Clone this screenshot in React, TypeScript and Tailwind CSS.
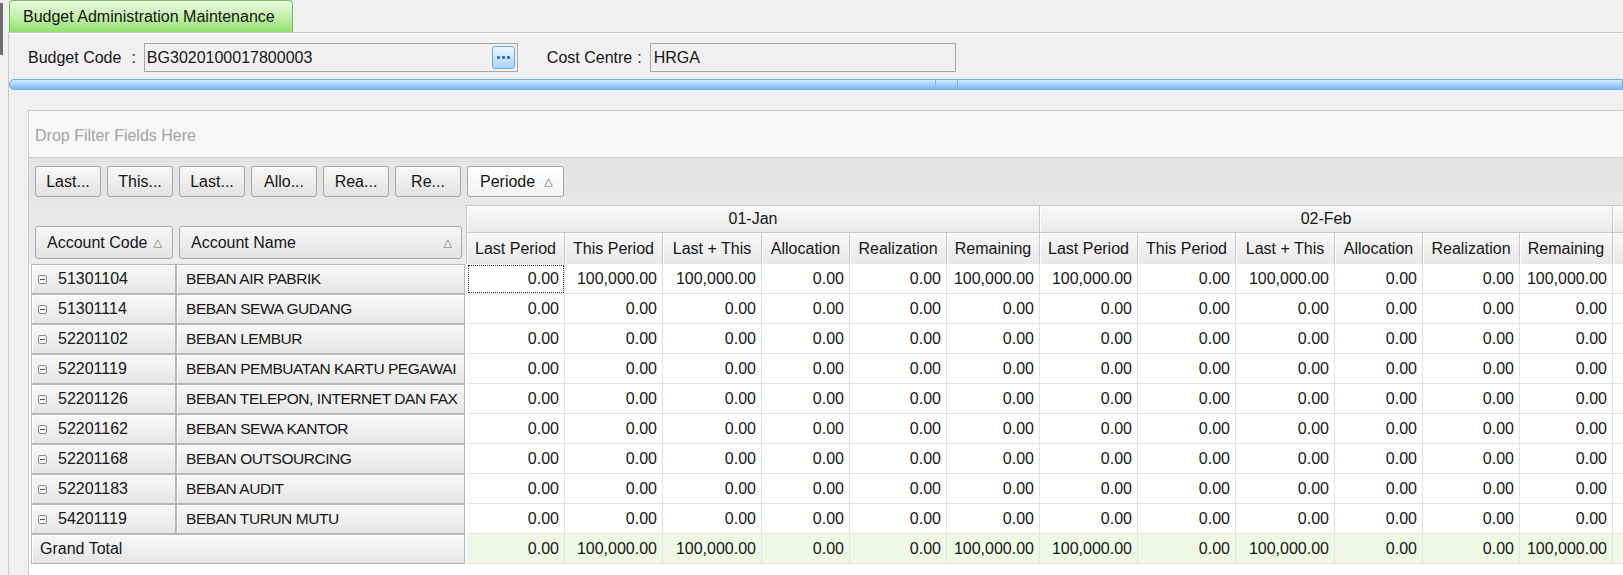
import React from 'react'

const cols = [
  { label: 'Last Period', w: 'w-[98px]' },
  { label: 'This Period', w: 'w-[98px]' },
  { label: 'Last + This', w: 'w-[99px]' },
  { label: 'Allocation', w: 'w-[88px]' },
  { label: 'Realization', w: 'w-[97px]' },
  { label: 'Remaining', w: 'w-[93px]' },
]

// third period only peeks in at the right edge, so it carries no text
const periods = ['01-Jan', '02-Feb', '']

const accounts = [
  ['51301104', 'BEBAN AIR PABRIK'],
  ['51301114', 'BEBAN SEWA GUDANG'],
  ['52201102', 'BEBAN LEMBUR'],
  ['52201119', 'BEBAN PEMBUATAN KARTU PEGAWAI'],
  ['52201126', 'BEBAN TELEPON, INTERNET DAN FAX'],
  ['52201162', 'BEBAN SEWA KANTOR'],
  ['52201168', 'BEBAN OUTSOURCING'],
  ['52201183', 'BEBAN AUDIT'],
  ['54201119', 'BEBAN TURUN MUTU'],
]

// values per period for the first account (others are zero)
const firstRow: number[][] = [
  [0, 100000, 100000, 0, 0, 100000],
  [100000, 0, 100000, 0, 0, 100000],
]

const fmt = (n: number) =>
  n.toLocaleString('en-US', { minimumFractionDigits: 2, maximumFractionDigits: 2 })

const fieldButtons = ['Last...', 'This...', 'Last...', 'Allo...', 'Rea...', 'Re...']

function Tri() {
  return <span className="font-['DejaVu_Sans',sans-serif] text-[11px] text-[#6f6f6f]">△</span>
}

function DataRow({ values, total, focus }: { values: number[][]; total?: boolean; focus?: boolean }) {
  const bg = total ? 'bg-[#eef8e4]' : 'bg-white'
  return (
    <div className="flex">
      {values.map((vals, p) =>
        cols.map((c, i) => (
          <div
            key={`${p}-${i}`}
            className={`${c.w} h-[30px] shrink-0 flex items-center justify-end pr-[5px] border-r border-b border-[#e2e2e2] ${bg} ${
              focus && p === 0 && i === 0 ? 'outline-1 outline-dotted outline-[#333] -outline-offset-2' : ''
            }`}
          >
            {fmt(vals[i])}
          </div>
        ))
      )}
      {/* sliver of the next period */}
      <div className={`w-[40px] h-[30px] shrink-0 border-b border-[#e2e2e2] ${bg}`} />
    </div>
  )
}

export default function App() {
  const zeros = [0, 1].map(() => [0, 0, 0, 0, 0, 0])

  return (
    <div className="w-[1623px] h-[575px] overflow-hidden bg-[#f0f0f0] flex font-['Liberation_Sans',Arial,sans-serif] text-[16px] text-[#161616] leading-none">
      {/* left gutter */}
      <div className="w-[8px] shrink-0">
        <div className="mt-[3px] h-[52px] w-[3px] bg-[#6e6e6e]" />
      </div>

      <div className="flex-1 min-w-0 flex flex-col">
        {/* Tab strip */}
        <div className="h-[33px] shrink-0 flex items-end border-b border-[#c6c6c6]">
          <div className="ml-[1px] h-[32px] w-[284px] rounded-t-[4px] border border-b-0 border-[#6fc24f] bg-gradient-to-b from-[#eafae2] via-[#c4efad] to-[#91e06d] pl-[13px] flex items-center">
            Budget Administration Maintenance
          </div>
        </div>

        {/* Panel */}
        <div className="flex-1 min-h-0 flex flex-col border-l border-[#c9c9c9] border-t border-t-white">
          {/* Header form */}
          <div className="pt-[9px] pl-[19px] flex items-center">
            <span>Budget Code</span>
            <span className="ml-[10px] mr-[8px]">:</span>
            <div className="w-[374px] h-[29px] border border-[#a9a9a9] bg-[#f0f0f0] flex items-center justify-between pl-[2px] pr-[2px]">
              <span>BG3020100017800003</span>
              <button className="w-[23px] h-[23px] rounded-[3px] border border-[#6ea7e2] bg-gradient-to-b from-[#eef7ff] to-[#a9d3fb] flex items-center justify-center gap-[2px]">
                <span className="w-[3px] h-[3px] bg-[#2c6fc4] rounded-[1px]" />
                <span className="w-[3px] h-[3px] bg-[#2c6fc4] rounded-[1px]" />
                <span className="w-[3px] h-[3px] bg-[#2c6fc4] rounded-[1px]" />
              </button>
            </div>
            <span className="ml-[29px]">Cost Centre</span>
            <span className="ml-[5px] mr-[8px]">:</span>
            <div className="w-[306px] h-[29px] border border-[#a9a9a9] bg-[#f0f0f0] flex items-center pl-[3px]">
              HRGA
            </div>
          </div>

          {/* Splitter */}
          <div className="mt-[7px] h-[11px] shrink-0 rounded-l-[5px] border border-[#6eaeea] bg-gradient-to-b from-[#d4eafe] via-[#a9d3fc] to-[#76b6ef] flex">
            <div className="ml-[925px] w-[23px] h-full border-x border-[#7fb6ea]" />
          </div>

          {/* Pivot grid */}
          <div className="mt-[20px] ml-[19px] flex-1 min-h-0 bg-white border-l border-t border-[#cbcbcb] flex flex-col">
            <div className="h-[47px] shrink-0 bg-[#f7f7f7] border-b border-[#cbcbcb] flex items-center pt-[4px] pl-[6px] text-[#a3a3a8]">
              Drop Filter Fields Here
            </div>

            <div className="shrink-0 bg-gradient-to-b from-[#e3e3e3] to-[#ececec]">
              {/* data field area */}
              <div className="h-[47px] pt-[8px] pl-[6px] flex gap-[6px]">
                {fieldButtons.map((b, i) => (
                  <div
                    key={i}
                    className="w-[66px] h-[31px] rounded-[3px] border border-[#a9a9a9] bg-gradient-to-b from-[#f8f8f8] to-[#e2e2e2] shadow-[inset_0_1px_0_#ffffff] flex items-center justify-center"
                  >
                    {b}
                  </div>
                ))}
                <div className="w-[97px] h-[31px] rounded-[3px] border border-[#a9a9a9] bg-gradient-to-b from-[#ffffff] to-[#f2f2f2] flex items-center pl-[12px] gap-[9px]">
                  Periode <Tri />
                </div>
              </div>

              {/* column + row header area */}
              <div className="h-[59px] flex">
                <div className="w-[437px] shrink-0 flex items-end pb-[5px] pl-[6px] gap-[6px]">
                  <div className="w-[138px] h-[33px] rounded-[3px] border border-[#a9a9a9] bg-gradient-to-b from-[#f8f8f8] to-[#e2e2e2] shadow-[inset_0_1px_0_#ffffff] flex items-center pl-[11px] gap-[6px]">
                    Account Code <Tri />
                  </div>
                  <div className="w-[283px] h-[33px] rounded-[3px] border border-[#a9a9a9] bg-gradient-to-b from-[#f8f8f8] to-[#e2e2e2] shadow-[inset_0_1px_0_#ffffff] flex items-center justify-between pl-[11px] pr-[9px]">
                    Account Name <Tri />
                  </div>
                </div>
                <div className="flex border-l border-[#c8c8c8] self-end">
                  {periods.map((p, gi) => (
                    <div key={gi} className="w-[573px] shrink-0 flex flex-col">
                      <div className="h-[27px] border-t border-r border-[#c8c8c8] bg-gradient-to-b from-[#f8f8f8] to-[#e9e9e9] shadow-[inset_1px_1px_0_#ffffff] flex items-center justify-center">
                        {p}
                      </div>
                      <div className="h-[32px] flex">
                        {cols.map((c) => (
                          <div
                            key={c.label}
                            className={`${c.w} shrink-0 border-t border-r border-[#c8c8c8] bg-gradient-to-b from-[#f8f8f8] to-[#e8e8e8] shadow-[inset_1px_1px_0_#ffffff] flex items-center justify-center`}
                          >
                            {p ? c.label : ''}
                          </div>
                        ))}
                      </div>
                    </div>
                  ))}
                </div>
              </div>
            </div>

            {/* rows */}
            {accounts.map(([code, name], r) => (
              <div key={code} className="flex shrink-0">
                <div className="w-[438px] shrink-0 pl-[2px] flex bg-white">
                  <div className="w-[145px] h-[30px] border border-[#b7b7b7] bg-gradient-to-b from-[#f8f8f8] to-[#e6e6e6] shadow-[inset_1px_1px_0_#ffffff] flex items-center pl-[6px] gap-[11px]">
                    <span className="w-[9px] h-[9px] border border-[#8d8d8d] rounded-[2px] flex items-center justify-center bg-[#f4f4f4]">
                      <span className="w-[5px] h-px bg-[#555]" />
                    </span>
                    {code}
                  </div>
                  <div className="w-[289px] h-[30px] border border-[#b7b7b7] bg-gradient-to-b from-[#f8f8f8] to-[#e6e6e6] shadow-[inset_1px_1px_0_#ffffff] flex items-center pl-[9px] text-[15.5px] tracking-[-0.45px]">
                    {name}
                  </div>
                </div>
                <DataRow values={r === 0 ? firstRow : zeros} focus={r === 0} />
              </div>
            ))}

            {/* grand total */}
            <div className="flex shrink-0">
              <div className="w-[438px] shrink-0 pl-[2px] flex bg-white">
                <div className="w-[434px] h-[30px] border border-[#b7b7b7] bg-gradient-to-b from-[#f8f8f8] to-[#e6e6e6] shadow-[inset_1px_1px_0_#ffffff] flex items-center pl-[8px]">
                  Grand Total
                </div>
              </div>
              <DataRow values={firstRow} total />
            </div>
          </div>
        </div>
      </div>
    </div>
  )
}
